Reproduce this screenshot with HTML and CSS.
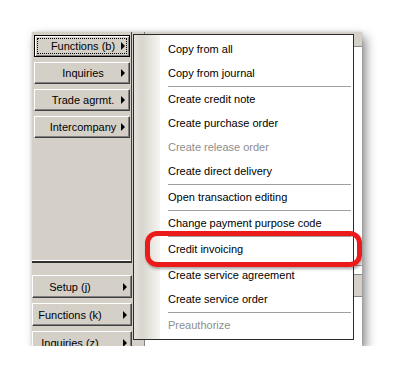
FILE: index.html
```html
<!DOCTYPE html>
<html lang="en">
<head>
    <meta charset="UTF-8">
    <title>Functions menu</title>
    <link rel="stylesheet" href="styles.css">
</head>
<body>
    <div class="shot">
        <!-- Button panel on the left -->
        <div class="side">
            <div class="upper">
                <div class="btn focus"><span class="label">Functions (b)</span><span class="arrow"></span></div>
                <div class="btn"><span class="label">Inquiries</span><span class="arrow"></span></div>
                <div class="btn"><span class="label">Trade agrmt.</span><span class="arrow"></span></div>
                <div class="btn"><span class="label">Intercompany</span><span class="arrow"></span></div>
            </div>
            <div class="lower">
                <div class="btn"><span class="label">Setup (j)</span><span class="arrow"></span></div>
                <div class="btn"><span class="label">Functions (k)</span><span class="arrow"></span></div>
                <div class="btn"><span class="label">Inquiries (z)</span><span class="arrow"></span></div>
            </div>
        </div>

        <!-- Form area behind the popup -->
        <div class="work">
            <div class="pane">
                <div class="tabs"></div>
                <div class="grid"></div>
                <div class="rowline"></div>
                <div class="band"></div>
                <div class="grid"></div>
            </div>
        </div>

        <!-- Popup menu -->
        <ul class="menu">
            <li class="item">Copy from all</li>
            <li class="item">Copy from journal</li>
            <li class="sep"></li>
            <li class="item">Create credit note</li>
            <li class="item">Create purchase order</li>
            <li class="item off">Create release order</li>
            <li class="item">Create direct delivery</li>
            <li class="sep"></li>
            <li class="item">Open transaction editing</li>
            <li class="sep"></li>
            <li class="item">Change payment purpose code</li>
            <li class="sep"></li>
            <li class="item">Credit invoicing</li>
            <li class="sep"></li>
            <li class="item">Create service agreement</li>
            <li class="item">Create service order</li>
            <li class="sep"></li>
            <li class="item off">Preauthorize</li>
        </ul>

        <!-- Red highlight drawn over the screenshot -->
        <div class="mark"></div>
    </div>
</body>
</html>
```

FILE: styles.css
```css
body {
    margin: 0;
    background: #fff;
    font-family: "Liberation Sans", Arial, sans-serif;
    font-size: 11px;
    color: #000;
}

.shot {
    position: relative;
    display: flex;
    width: 330px;
    height: 314px;
    margin: 32px 0 0 32px;
    background: #d4d0c8;
    overflow: hidden;
    box-shadow: 4px 5px 10px rgba(0, 0, 0, 0.45), 0 0 3px rgba(0, 0, 0, 0.15);
}

/* Left button panel */
.side {
    width: 100px;
    display: flex;
    flex-direction: column;
}

.upper {
    flex-shrink: 0;
    height: 226px;
    padding: 3px 0 0 2px;
    display: flex;
    flex-direction: column;
    gap: 5px;
    border-right: 1px solid #404040;
    border-bottom: 2px solid #303030;
    box-shadow: inset 0 -1px #fff;
}

.upper .btn {
    width: 96px;
    height: 22px;
}

.upper .label {
    padding-left: 10px;
}

.lower {
    flex-shrink: 0;
    padding-top: 12px;
    display: flex;
    flex-direction: column;
    gap: 5px;
}

.lower .btn {
    width: 100px;
    height: 23px;
}

.lower .label {
    padding-right: 16px;
}

.btn {
    box-sizing: border-box;
    flex-shrink: 0;
    display: flex;
    align-items: center;
    border: 1px solid;
    border-color: #fff #404040 #404040 #fff;
    box-shadow: inset -1px -1px #808080;
    background: #d4d0c8;
}

.btn.focus {
    border-color: #000;
    box-shadow: inset 1px 1px #fff, inset -1px -1px #808080;
    outline: 1px dotted #000;
    outline-offset: -4px;
}

.label {
    flex: 1;
    text-align: center;
    white-space: nowrap;
}

.arrow {
    width: 0;
    height: 0;
    margin-right: 4px;
    border-top: 4px solid transparent;
    border-bottom: 4px solid transparent;
    border-left: 4px solid #000;
}

/* Form area behind the menu */
.work {
    flex: 1;
    padding-left: 12px;
    display: flex;
}

.pane {
    flex: 1;
    display: flex;
    flex-direction: column;
    border-left: 1px solid #808080;
    background: #fff;
}

.tabs {
    height: 14px;
    background: #d4d0c8;
    border-bottom: 1px solid #8a8a8a;
}

.grid {
    height: 218px;
}

.grid:last-child {
    flex: 1;
}

.rowline {
    height: 8px;
    border-top: 1px solid #a0a0a0;
}

.band {
    height: 21px;
    background: #d4d0c8;
    border-top: 1px solid #8a8a8a;
    border-bottom: 1px solid #8a8a8a;
}

/* Popup menu */
.menu {
    position: absolute;
    left: 101px;
    top: 2px;
    width: 219px;
    margin: 0;
    padding: 2px 0;
    list-style: none;
    border: 1px solid #2a2a2a;
    background: linear-gradient(to right, #e4e2dc 0, #d8d5cd 8px, #f6f5f2 26px, #fff 26px);
}

.item {
    height: 24px;
    line-height: 24px;
    padding-left: 34px;
    white-space: nowrap;
}

.item.off {
    color: #8d8d8d;
}

.sep {
    height: 1px;
    margin: 0 2px 0 34px;
    border-bottom: 1px solid #a0a0a0;
}

/* Red annotation frame */
.mark {
    position: absolute;
    left: 113px;
    top: 199px;
    width: 207px;
    height: 26px;
    border: 5px solid #ec1b1b;
    border-radius: 12px;
    box-shadow: 1px 2px 3px rgba(0, 0, 0, 0.35);
}
```
